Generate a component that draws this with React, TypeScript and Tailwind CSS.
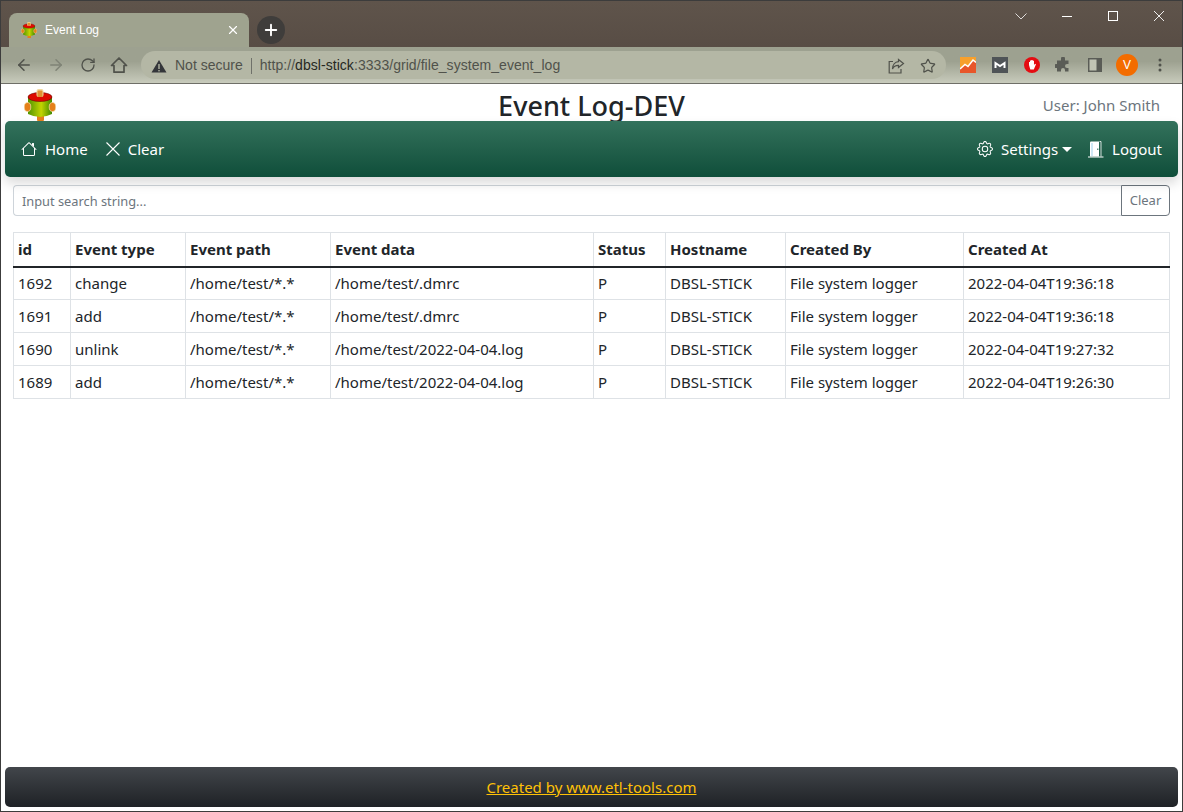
import { ArrowLeft, ArrowRight, RotateCw, Star, X, Plus } from 'lucide-react';

const rows = [
  ['1692', 'change', '/home/test/*.*', '/home/test/.dmrc', 'P', 'DBSL-STICK', 'File system logger', '2022-04-04T19:36:18'],
  ['1691', 'add', '/home/test/*.*', '/home/test/.dmrc', 'P', 'DBSL-STICK', 'File system logger', '2022-04-04T19:36:18'],
  ['1690', 'unlink', '/home/test/*.*', '/home/test/2022-04-04.log', 'P', 'DBSL-STICK', 'File system logger', '2022-04-04T19:27:32'],
  ['1689', 'add', '/home/test/*.*', '/home/test/2022-04-04.log', 'P', 'DBSL-STICK', 'File system logger', '2022-04-04T19:26:30'],
];

const columns = [
  { label: 'id', width: 'w-[57px]' },
  { label: 'Event type', width: 'w-[115px]' },
  { label: 'Event path', width: 'w-[145px]' },
  { label: 'Event data', width: 'w-[263px]' },
  { label: 'Status', width: 'w-[72px]' },
  { label: 'Hostname', width: 'w-[120px]' },
  { label: 'Created By', width: 'w-[178px]' },
  { label: 'Created At', width: 'w-[206px]' },
];

function Logo({ size, id }: { size: number; id: string }) {
  return (
    <svg width={size} height={size} viewBox="0 0 32 32">
      <defs>
        <linearGradient id={id} x1="0" x2="1" y1="0" y2="0">
          <stop offset="0" stopColor="#4f9400" />
          <stop offset="0.55" stopColor="#c3d400" />
          <stop offset="1" stopColor="#3f8a00" />
        </linearGradient>
      </defs>
      <rect x="13" y="26" width="7" height="6" rx="1" fill="#e5801a" />
      <path d="M4 8 V25 Q16 31 28 25 V8 Z" fill={`url(#${id})`} />
      <ellipse cx="16" cy="8" rx="12" ry="4.500" fill="#dd0a00" stroke="#500" strokeWidth="0.5" />
      <rect x="12.500" y="0" width="7" height="8" rx="2" fill="#f0d9a0" />
      <rect x="13.500" y="1.500" width="5" height="6.500" rx="1" fill="#e09030" />
      <ellipse cx="3.500" cy="18" rx="3.300" ry="4.500" fill="#e5801a" stroke="#f5e3b0" strokeWidth="0.7" />
      <ellipse cx="28.500" cy="18" rx="3.300" ry="4.500" fill="#e5801a" stroke="#f5e3b0" strokeWidth="0.7" />
    </svg>
  );
}

function HouseIcon() {
  return (
    <svg width="16" height="16" viewBox="0 0 16 16" fill="currentColor">
      <path d="M2 13.5V7h1v6.5a.5.5 0 0 0 .5.5h9a.5.5 0 0 0 .5-.5V7h1v6.5a1.5 1.5 0 0 1-1.5 1.5h-9A1.5 1.5 0 0 1 2 13.5zm11-11V6l-2-2V2.5a.5.5 0 0 1 .5-.5h1a.5.5 0 0 1 .5.5z" />
      <path d="M7.293 1.5a1 1 0 0 1 1.414 0l6.647 6.646a.5.5 0 0 1-.708.708L8 2.207 1.354 8.854a.5.5 0 1 1-.708-.708L7.293 1.5z" />
    </svg>
  );
}

function CrossIcon() {
  return (
    <svg width="16" height="16" viewBox="0 0 16 16" fill="none" stroke="currentColor" strokeWidth="1.1">
      <path d="M1.5 1.5 14.5 14.5M14.5 1.5 1.5 14.5" />
    </svg>
  );
}

function GearIcon() {
  return (
    <svg width="16" height="16" viewBox="0 0 16 16" fill="currentColor">
      <path d="M8 4.754a3.246 3.246 0 1 0 0 6.492 3.246 3.246 0 0 0 0-6.492zM5.754 8a2.246 2.246 0 1 1 4.492 0 2.246 2.246 0 0 1-4.492 0z" />
      <path d="M9.796 1.343c-.527-1.79-3.065-1.79-3.592 0l-.094.319a.873.873 0 0 1-1.255.52l-.292-.16c-1.64-.892-3.433.902-2.54 2.541l.159.292a.873.873 0 0 1-.52 1.255l-.319.094c-1.79.527-1.79 3.065 0 3.592l.319.094a.873.873 0 0 1 .52 1.255l-.16.292c-.892 1.64.901 3.434 2.541 2.54l.292-.159a.873.873 0 0 1 1.255.52l.094.319c.527 1.79 3.065 1.79 3.592 0l.094-.319a.873.873 0 0 1 1.255-.52l.292.16c1.64.893 3.434-.902 2.54-2.541l-.159-.292a.873.873 0 0 1 .52-1.255l.319-.094c1.79-.527 1.79-3.065 0-3.592l-.319-.094a.873.873 0 0 1-.52-1.255l.16-.292c.893-1.64-.902-3.433-2.541-2.54l-.292.159a.873.873 0 0 1-1.255-.52l-.094-.319zm-2.633.283c.246-.835 1.428-.835 1.674 0l.094.319a1.873 1.873 0 0 0 2.693 1.115l.291-.16c.764-.415 1.6.42 1.184 1.185l-.159.292a1.873 1.873 0 0 0 1.116 2.692l.318.094c.835.246.835 1.428 0 1.674l-.319.094a1.873 1.873 0 0 0-1.115 2.693l.16.291c.415.764-.42 1.6-1.185 1.184l-.291-.159a1.873 1.873 0 0 0-2.693 1.116l-.094.318c-.246.835-1.428.835-1.674 0l-.094-.319a1.873 1.873 0 0 0-2.692-1.115l-.292.16c-.764.415-1.6-.42-1.184-1.185l.159-.291A1.873 1.873 0 0 0 1.945 8.93l-.319-.094c-.835-.246-.835-1.428 0-1.674l.319-.094A1.873 1.873 0 0 0 3.06 4.377l-.16-.292c-.415-.764.42-1.6 1.185-1.184l.292.159a1.873 1.873 0 0 0 2.692-1.115l.094-.319z" />
    </svg>
  );
}

function DoorIcon() {
  return (
    <svg width="16" height="17" viewBox="0 0 16 17">
      <path d="M2 15.500 V1.500 Q2 .5 3 .5 H11 V15.500 Z" fill="#fff" />
      <rect x="3" y="2" width="2" height="13" fill="#cfe8f5" />
      <path d="M11.500 .5 H13 V15.500" fill="none" stroke="#fff" strokeWidth="0.8" />
      <path d="M0 16 H15.500" stroke="#fff" />
      <rect x="9.300" y="7.500" width="1" height="1.500" fill="#1f5f4a" />
    </svg>
  );
}

function ChromeHome() {
  return (
    <svg width="18" height="18" viewBox="0 0 18 18" fill="none" stroke="currentColor" strokeWidth="1.700" strokeLinejoin="round">
      <path d="M9 2 1.500 9.500H4V16.200H14V9.500H16.500Z" />
    </svg>
  );
}

function ShareIcon() {
  return (
    <svg width="17" height="16" viewBox="0 0 17 16" fill="none" stroke="currentColor" strokeWidth="1.200">
      <path d="M5 3.500H1.200V15H13V11" />
      <path d="M10.500 1.500 15.500 5.500 10.500 9.500V7.300C7.500 7.300 5.500 8.500 4.500 11 4.500 7 7 4 10.500 3.700Z" />
    </svg>
  );
}

function WindowControls() {
  return (
    <div className="absolute right-0 top-0 h-[30px] flex text-white">
      <div className="w-[46px] flex items-center justify-center">
        <svg width="12" height="7" viewBox="0 0 12 7" fill="none" stroke="currentColor" strokeWidth="0.8"><path d="M.5.5 6 6 11.500.5" /></svg>
      </div>
      <div className="w-[46px] flex items-center justify-center">
        <svg width="10" height="1" viewBox="0 0 10 1"><rect width="10" height="1" fill="currentColor" /></svg>
      </div>
      <div className="w-[46px] flex items-center justify-center">
        <svg width="10" height="10" viewBox="0 0 10 10" fill="none" stroke="currentColor"><rect x=".5" y=".5" width="9" height="9" /></svg>
      </div>
      <div className="w-[46px] flex items-center justify-center">
        <svg width="10" height="10" viewBox="0 0 10 10" fill="none" stroke="currentColor" strokeWidth="0.9"><path d="M0 0 10 10M10 0 0 10" /></svg>
      </div>
    </div>
  );
}

function ChromeFrame() {
  return (
    <div className="shrink-0 font-['Liberation_Sans',sans-serif]">
      {/* tab strip */}
      <div className="h-[46px] flex items-end pl-[8px] bg-gradient-to-b from-[#5f544b] to-[#584d45] relative">
        <div className="w-[240px] h-[34px] bg-[#9fa38f] rounded-t-[8px] flex items-center pl-[12px] pr-[9px] text-white">
          <Logo size={16} id="tabLogo" />
          <span className="ml-[8px] text-[12px] flex-1">Event Log</span>
          <X size={14} strokeWidth={2} />
        </div>
        <div className="w-[28px] h-[28px] rounded-full bg-[#3f3d3b] flex items-center justify-center text-white ml-[8px] mb-[3px]">
          <Plus size={18} strokeWidth={2.5} />
        </div>
        <WindowControls />
      </div>
      {/* toolbar */}
      <div className="h-[37px] flex items-center bg-gradient-to-b from-[#9da190] from-40% to-[#c8cbbc] border-b border-[#6f6f68] pl-[14px] pr-[12px] text-[#50524b]">
        <ArrowLeft size={18} strokeWidth={2} />
        <ArrowRight size={18} strokeWidth={2} className="ml-[14px] text-[#7f8376]" />
        <RotateCw size={16} strokeWidth={2} className="ml-[15px]" />
        <span className="ml-[14px]"><ChromeHome /></span>
        <div className="ml-[13px] w-[805px] h-[28px] rounded-full bg-[#b4b7a5] flex items-center pl-[10px] pr-[10px] pt-[2px] text-[14px] mb-[1px]">
          <svg width="16" height="14" viewBox="0 0 16 14"><path d="M8 1 15.500 13.500H.5Z" fill="#34363a" /><rect x="7.300" y="5" width="1.400" height="5" fill="#b4b7a5" /><rect x="7.300" y="11" width="1.400" height="1.400" fill="#b4b7a5" /></svg>
          <span className="ml-[8px] text-[#50524b]">Not secure</span>
          <span className="mx-[8px] w-px h-[16px] bg-[#6f716a]" />
          <span className="flex-1 text-[#50524b] tracking-[0.05px]">http://<span className="text-[#26281f]">dbsl-stick</span>:3333/grid/file_system_event_log</span>
          <ShareIcon />
          <Star size={16} strokeWidth={1.8} className="ml-[15px]" />
        </div>
        <div className="ml-[14px] flex items-center">
          <svg width="16" height="16" viewBox="0 0 16 16"><rect width="16" height="16" fill="#f7a02c" /><path d="M0 16V12L5 7.500l3 2 5-6.500 3 2.500V16Z" fill="#e8562a" /><path d="M0 12 5 7.500l3 2 5-6.500 3 2.500" fill="none" stroke="#fff" strokeWidth="1.500" /></svg>
          <svg width="16" height="16" viewBox="0 0 16 16" className="ml-[16px]"><rect width="16" height="16" fill="#4f5457" /><path d="M3.500 11V6l4.500 3 4.500-3V11" fill="none" stroke="#fff" strokeWidth="2" /></svg>
          <svg width="16" height="16" viewBox="0 0 16 16" className="ml-[16px]"><circle cx="8" cy="8" r="8" fill="#e40c12" /><path d="M5 8V5h1v2V3.500h1.300v3.500V3h1.400v4V3.700H10V8l1-1.200 1 .5L9.800 12.500H6.300Z" fill="#fff" /></svg>
          <svg width="16" height="16" viewBox="0 0 16 16" className="ml-[15px]" fill="#5a5c56"><path d="M6 1.500a2 2 0 0 1 4 0V3.500h3.500V7h-1.500a2 2 0 0 0 0 4h1.500v3.500H10V13a2 2 0 0 0-4 0v1.500H2V11H1a2 2 0 0 1 0-4h1V3.500h4Z" /></svg>
          <svg width="14" height="14" viewBox="0 0 14 14" className="ml-[17px]"><rect width="14" height="14" fill="#5a5c56" /><rect x="1.500" y="1.500" width="7" height="11" fill="#c0c3b3" /></svg>
          <div className="ml-[14px] w-[22px] h-[22px] rounded-full bg-[#f36c00] text-white text-[12px] flex items-center justify-center">V</div>
          <svg width="4" height="14" viewBox="0 0 4 14" className="ml-[20px]" fill="#50524b"><circle cx="2" cy="2" r="1.500" /><circle cx="2" cy="7" r="1.500" /><circle cx="2" cy="12" r="1.500" /></svg>
        </div>
      </div>
    </div>
  );
}

export default function App() {
  return (
    <div className="h-[812px] w-[1183px] overflow-hidden flex flex-col bg-white border border-[#3c3c3c] font-['Noto_Sans',sans-serif] text-[#212529] relative">
      <ChromeFrame />

      {/* page header */}
      <div className="h-[37px] shrink-0 flex items-center justify-between pl-[23px] pr-[22px] relative">
        <span className="mt-[4px]"><Logo size={32} id="pageLogo" /></span>
        <h1 className="absolute left-0 right-0 top-0 text-center text-[27px] font-medium leading-[43px]">Event Log-DEV</h1>
        <span className="text-[#6c757d] text-[15px] mt-[6px]">User: John Smith</span>
      </div>

      {/* navbar */}
      <nav className="mx-[4px] h-[56px] shrink-0 rounded-[5px] bg-gradient-to-b from-[#33725c] to-[#0e4e3a] shadow-[0_6px_12px_rgba(0,0,0,0.15)] flex items-center justify-between px-[16px] text-white text-[15px] relative">
        <div className="flex items-center">
          <HouseIcon />
          <span className="ml-[8px]">Home</span>
          <span className="ml-[17px]"><CrossIcon /></span>
          <span className="ml-[7px]">Clear</span>
        </div>
        <div className="flex items-center">
          <GearIcon />
          <span className="ml-[8px]">Settings</span>
          <span className="ml-[4px] w-0 h-0 border-x-[5px] border-x-transparent border-t-[5px] border-t-white" />
          <span className="ml-[16px]"><DoorIcon /></span>
          <span className="ml-[8px]">Logout</span>
        </div>
      </nav>

      {/* search */}
      <div className="mx-[12px] mt-[8px] h-[31px] flex shrink-0 text-[14px]">
        <input
          type="text"
          placeholder="Input search string..."
          className="flex-1 min-w-0 border border-[#ced4da] border-r-0 rounded-l-[4px] px-[8px] pt-[2px] text-[12.8px] placeholder:text-[#6c757d] outline-none"
        />
        <button type="button" className="w-[49px] border border-[#6c757d] rounded-r-[4px] text-[#6c757d] text-[13px]">Clear</button>
      </div>

      {/* table */}
      <div className="ml-[12px] mr-[13px] mt-[16px]">
        <table className="w-full table-fixed border-collapse text-[15px]">
          <thead>
            <tr className="h-[34px]">
              {columns.map((col) => (
                <th key={col.label} className={`${col.width} border-x border-t border-[#dee2e6] border-b-2 border-b-[#212529] px-[4px] py-0 text-left font-bold`}>
                  {col.label}
                </th>
              ))}
            </tr>
          </thead>
          <tbody>
            {rows.map((row) => (
              <tr key={row[0]} className="h-[33px]">
                {row.map((cell, i) => (
                  <td key={i} className="border border-[#dee2e6] px-[4px] py-0">{cell}</td>
                ))}
              </tr>
            ))}
          </tbody>
        </table>
      </div>

      {/* footer */}
      <footer className="mt-auto mb-[4px] mx-[4px] h-[40px] shrink-0 rounded-[5px] bg-gradient-to-b from-[#42464b] to-[#1f2226] flex items-center justify-center text-[15px]">
        <a href="#" className="text-[#ffc107] underline">Created by www.etl-tools.com</a>
      </footer>
    </div>
  );
}
